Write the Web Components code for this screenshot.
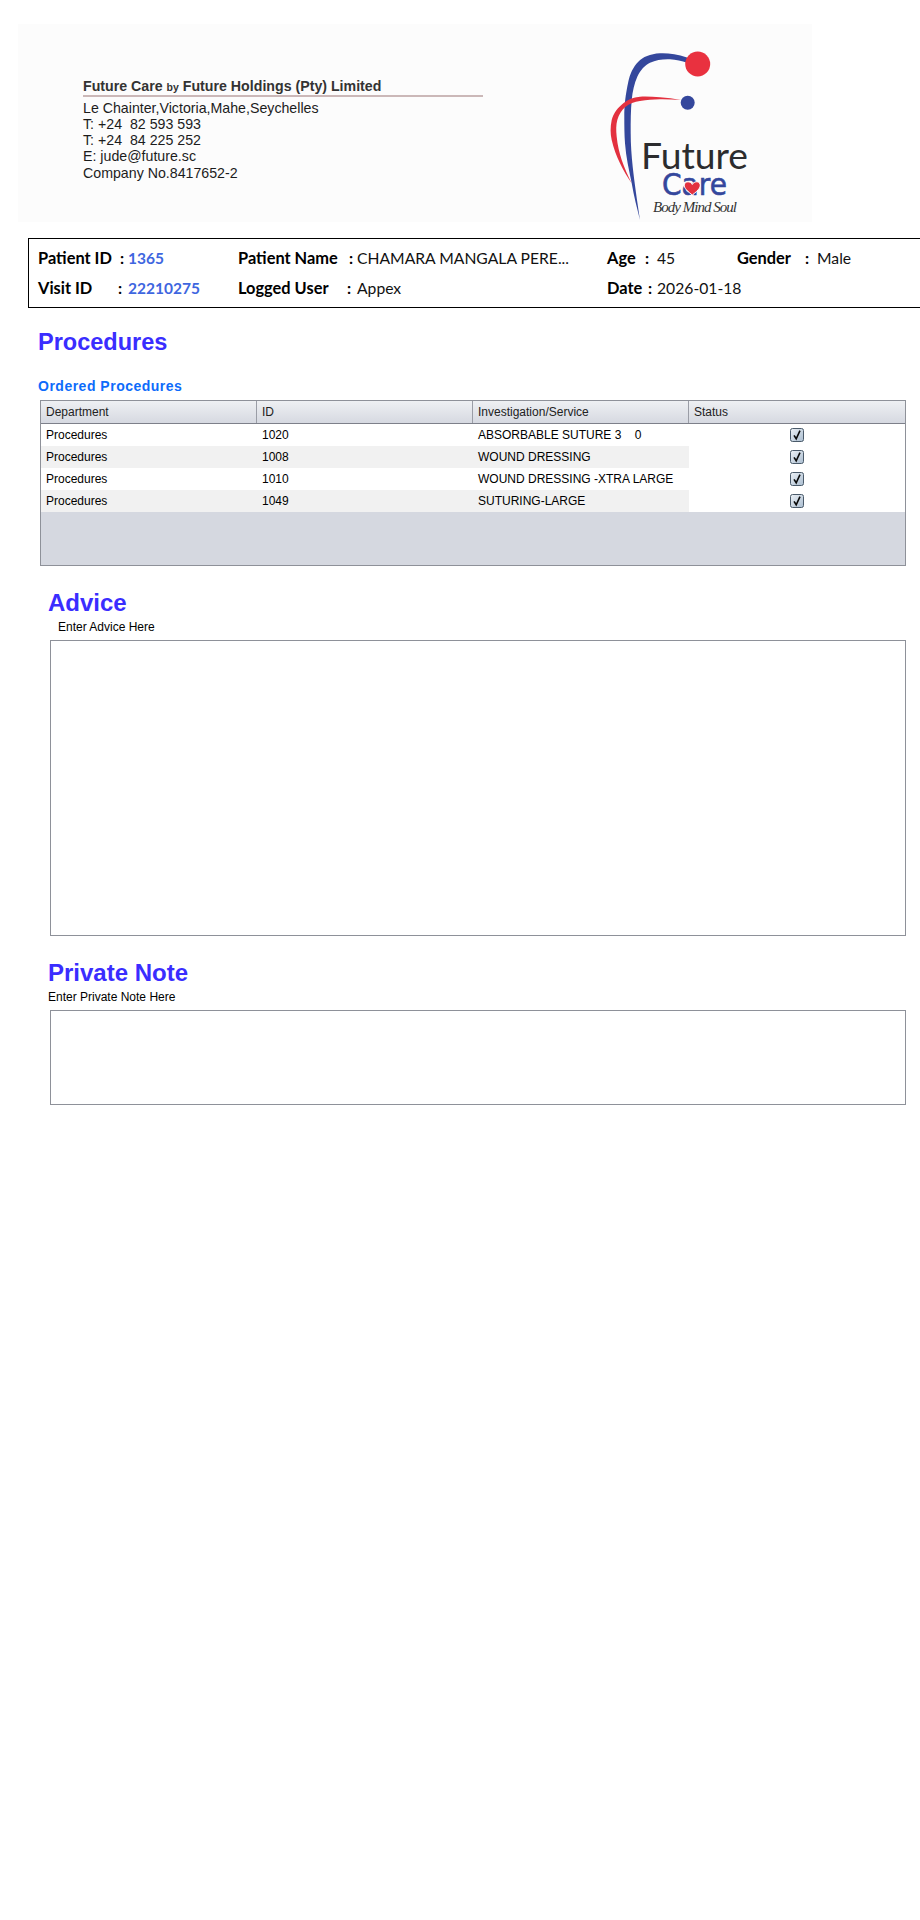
<!DOCTYPE html>
<html>
<head>
<meta charset="utf-8">
<title>Procedures</title>
<style>
  html, body { margin: 0; background: #fff; }
  body { font-family: "Liberation Sans", Arial, sans-serif; overflow-x: hidden; }
  main { display: flex; flex-direction: column; min-height: 1920px; }
</style>
</head>
<body>
<main>
  <fc-letterhead></fc-letterhead>
  <patient-bar></patient-bar>
  <section-title size="23.5" left="38" top="21" bottom="0">Procedures</section-title>
  <section-title size="14" left="38" top="22" bottom="6" color="#0d6bfb" spacing="0.5">Ordered Procedures</section-title>
  <orders-table></orders-table>
  <note-box title="Advice" label="Enter Advice Here" title-left="48" label-left="58" height="296"></note-box>
  <note-box title="Private Note" label="Enter Private Note Here" title-left="48" label-left="48" height="95"></note-box>
</main>

<script>
// Logo, traced from the reference (viewBox is in page coordinates). The words stay real text.
class FcLogo extends HTMLElement {
  constructor() {
    super();
    this.attachShadow({ mode: 'open' });
    this.shadowRoot.innerHTML = `
      <style>
        :host { display: block; width: 160px; height: 192px; }
        svg { display: block; }
      </style>
      <svg width="160" height="192" viewBox="600 30 160 192">
        <path d="M687 57.5 C677 54 668 53 660 53.3 C650 54 643 57 638.3 61.7 C633 67 630 74 628.3 81.7 C625.5 95 624.3 105 624.3 116.7 C624.3 126 624.4 135 625 143.3 C626 157 629 170 631.7 183.3 C634 197 637 208 640 220 C637 200 634.5 183 632.7 166.7 C631.5 155 630.7 145 630.7 133.3 C630.6 121 630.8 110 631.7 100 C632.5 91 634.5 83 637.3 76.7 C640.5 70 645 65 650 62.7 C656 60 663 59 670 59.3 C676 59.6 682 61 687 62.7 Z" fill="#34479c"/>
        <circle cx="697.7" cy="64" r="12.5" fill="#e9313f"/>
        <path d="M681 100 C674 98.8 667 97.8 660 97.3 C653 96.8 646 96.2 640 96.7 C633 97.3 628 99.5 623.3 103.3 C618 107.5 613.5 113 611.7 120 C610.2 127 610.3 134 611.7 140 C613.5 148 616.5 156 620 163.3 C623 170 627.5 177 631.7 183.3 C628 176 624.5 168 621.7 160 C619.5 153 617.5 145 616.7 136.7 C616 130 616 125 617.3 120 C619 114.5 621.5 110.5 625 107.3 C629.5 103.5 634.5 101.8 640 101 C647 100 653 99.5 660 99.3 C667 99.2 674 99.6 681 100 Z" fill="#e3313f"/>
        <circle cx="687.7" cy="102.7" r="7" fill="#34479c"/>
        <text x="641" y="169" font-family="Lato, sans-serif" font-size="37" fill="#2c2c2e" textLength="107" lengthAdjust="spacingAndGlyphs">Future</text>
        <text x="662" y="195" font-family="'DejaVu Sans', sans-serif" font-size="30" fill="#34479c" stroke="#34479c" stroke-width="0.6" textLength="65" lengthAdjust="spacingAndGlyphs">Care</text>
        <path d="M692.3 195 C685 189.5 683.5 186.5 684.5 184 C685.5 181 690.5 181 692.3 184.5 C694 181 699 181 700 184 C701 186.5 699.5 189.5 692.3 195 Z" fill="#e3313f" stroke="#fff" stroke-width="1"/>
        <text x="653" y="211.7" font-family="'Liberation Serif', serif" font-style="italic" font-size="15" fill="#333" textLength="84">Body Mind Soul</text>
      </svg>`;
  }
}
customElements.define('fc-logo', FcLogo);

class FcLetterhead extends HTMLElement {
  constructor() {
    super();
    this.attachShadow({ mode: 'open' });
    this.shadowRoot.innerHTML = `
      <style>
        :host {
          display: flex;
          justify-content: space-between;
          box-sizing: border-box;
          width: 794px;
          height: 198px;
          margin: 24px 0 16px 18px;
          background: #fcfcfc;
          color: #1c1c1c;
        }
        .company { width: 400px; margin: 54px 0 0 65px; }
        h1 {
          margin: 0 0 2.5px;
          border-bottom: 2px solid #cbb8b8;
          font-size: 14.2px;
          line-height: 16px;
          color: #333;
        }
        h1 small { font-size: 10.5px; }
        p { margin: 0; font-size: 14.2px; line-height: 16.3px; }
        fc-logo { margin: 6px 52px 0 0; }
      </style>
      <div class="company">
        <h1>Future Care <small>by</small> Future Holdings (Pty) Limited</h1>
        <p>Le Chainter,Victoria,Mahe,Seychelles</p>
        <p>T: +24&nbsp; 82 593 593</p>
        <p>T: +24&nbsp; 84 225 252</p>
        <p>E: jude@future.sc</p>
        <p>Company No.8417652-2</p>
      </div>
      <fc-logo></fc-logo>`;
  }
}
customElements.define('fc-letterhead', FcLetterhead);

// One "label : value" pair, colon and value sit at given offsets
class PatientField extends HTMLElement {
  constructor() {
    super();
    this.attachShadow({ mode: 'open' });
  }

  connectedCallback() {
    const colon = this.getAttribute('colon');
    const start = this.getAttribute('start');
    const accent = this.hasAttribute('accent');
    this.shadowRoot.innerHTML = `
      <style>
        :host { display: flex; align-items: baseline; white-space: nowrap; }
        b { flex: none; width: ${colon}px; font-size: 16.4px; }
        i { flex: none; width: ${start - colon}px; font-style: normal; font-weight: 700; }
        span { flex: none; color: ${accent ? '#3e66e0' : '#111'}; font-weight: ${accent ? 700 : 400}; font-size: ${accent ? 15.5 : 15.7}px; }
      </style>
      <b>${this.getAttribute('label')}</b><i>:</i><span><slot></slot></span>`;
  }
}
customElements.define('patient-field', PatientField);

class PatientBar extends HTMLElement {
  constructor() {
    super();
    this.attachShadow({ mode: 'open' });
    this.shadowRoot.innerHTML = `
      <style>
        :host {
          display: grid;
          grid-template-columns: 200px 369px 130px 1fr;
          grid-template-rows: 30px 30px;
          align-items: center;
          box-sizing: border-box;
          width: 892px;
          height: 70px;
          margin-left: 28px;
          padding: 3px 0 0 9px;
          border: 1px solid #000;
          border-right: 0;
          font: 16px Lato, sans-serif;
          color: #000;
        }
      </style>
      <patient-field label="Patient ID" colon="82" start="90" accent>1365</patient-field>
      <patient-field label="Patient Name" colon="111" start="119">CHAMARA MANGALA PERE...</patient-field>
      <patient-field label="Age" colon="38" start="50">45</patient-field>
      <patient-field label="Gender" colon="68" start="80">Male</patient-field>
      <patient-field label="Visit ID" colon="80" start="90" accent>22210275</patient-field>
      <patient-field label="Logged User" colon="109" start="119">Appex</patient-field>
      <patient-field label="Date" colon="41" start="50">2026-01-18</patient-field>`;
  }
}
customElements.define('patient-bar', PatientBar);

class SectionTitle extends HTMLElement {
  constructor() {
    super();
    this.attachShadow({ mode: 'open' });
  }

  connectedCallback() {
    const size = Number(this.getAttribute('size'));
    this.shadowRoot.innerHTML = `
      <style>
        :host {
          display: block;
          margin: ${this.getAttribute('top')}px 0 ${this.getAttribute('bottom')}px ${this.getAttribute('left')}px;
          font-size: ${size}px;
          line-height: ${Math.round(size * 1.15)}px;
          font-weight: 700;
          letter-spacing: ${this.getAttribute('spacing') || 0}px;
          color: ${this.getAttribute('color') || '#3a2dff'};
        }
      </style>
      <slot></slot>`;
  }
}
customElements.define('section-title', SectionTitle);

class CheckMark extends HTMLElement {
  constructor() {
    super();
    this.attachShadow({ mode: 'open' });
    this.shadowRoot.innerHTML = `
      <style>
        :host { display: block; width: 14px; height: 14px; }
        svg { display: block; }
      </style>
      <svg width="14" height="14" viewBox="0 0 14 14">
        <defs>
          <linearGradient id="box" x1="0" y1="0" x2="1" y2="1">
            <stop offset="0" stop-color="#eef2f6"/>
            <stop offset="1" stop-color="#a9bccf"/>
          </linearGradient>
        </defs>
        <rect x="0.5" y="0.5" width="13" height="13" rx="2" fill="url(#box)" stroke="#4a5a6a"/>
        <path d="M4 7.4 L6.2 10.8 L10 2.6" fill="none" stroke="#0a0a0a" stroke-width="1.6"/>
      </svg>`;
  }
}
customElements.define('check-mark', CheckMark);

const orders = [
  { department: 'Procedures', id: '1020', service: 'ABSORBABLE SUTURE 3 \u00a0\u00a0 0' },
  { department: 'Procedures', id: '1008', service: 'WOUND DRESSING' },
  { department: 'Procedures', id: '1010', service: 'WOUND DRESSING -XTRA LARGE' },
  { department: 'Procedures', id: '1049', service: 'SUTURING-LARGE' }
];

class OrdersTable extends HTMLElement {
  constructor() {
    super();
    this.attachShadow({ mode: 'open' });

    const rows = orders.map((o, i) => `
      <div class="row ${i % 2 ? 'odd' : ''}">
        <div class="cell">${o.department}</div>
        <div class="cell">${o.id}</div>
        <div class="cell">${o.service}</div>
        <div class="status"><check-mark></check-mark></div>
      </div>`).join('');

    this.shadowRoot.innerHTML = `
      <style>
        :host {
          display: block;
          box-sizing: border-box;
          width: 866px;
          height: 166px;
          margin-left: 40px;
          border: 1px solid #8e9199;
          background: #d5d8e0;
          font-size: 12px;
          color: #000;
        }
        .head, .row { display: grid; grid-template-columns: 216px 216px 216px 1fr; }
        .head {
          height: 22px;
          border-bottom: 1px solid #7d808a;
          background: linear-gradient(#eef0f3, #d6d9e1);
          line-height: 22px;
        }
        .head div { padding-left: 5px; border-right: 1px solid #9a9da6; color: #222; }
        .head div:last-child { border-right: 0; }
        .row { height: 22px; line-height: 22px; background: #fff; }
        .cell { padding-left: 5px; }
        .odd .cell { background: #f1f1f1; }
        .status { display: flex; align-items: center; justify-content: center; }
      </style>
      <div class="head">
        <div>Department</div><div>ID</div><div>Investigation/Service</div><div>Status</div>
      </div>
      ${rows}`;
  }
}
customElements.define('orders-table', OrdersTable);

class NoteBox extends HTMLElement {
  constructor() {
    super();
    this.attachShadow({ mode: 'open' });
  }

  connectedCallback() {
    this.shadowRoot.innerHTML = `
      <style>
        :host { display: block; margin-top: 23px; }
        h2 {
          margin: 0 0 0 ${this.getAttribute('title-left')}px;
          font-size: 24px;
          line-height: 28px;
          color: #3a2dff;
        }
        label {
          display: block;
          margin: 2px 0 5px ${this.getAttribute('label-left')}px;
          font-size: 12px;
          line-height: 16px;
          color: #000;
        }
        .box {
          box-sizing: border-box;
          width: 856px;
          height: ${this.getAttribute('height')}px;
          margin-left: 50px;
          border: 1px solid #8e9199;
          background: #fff;
        }
      </style>
      <h2>${this.getAttribute('title')}</h2>
      <label>${this.getAttribute('label')}</label>
      <div class="box"></div>`;
  }
}
customElements.define('note-box', NoteBox);
</script>
</body>
</html>
